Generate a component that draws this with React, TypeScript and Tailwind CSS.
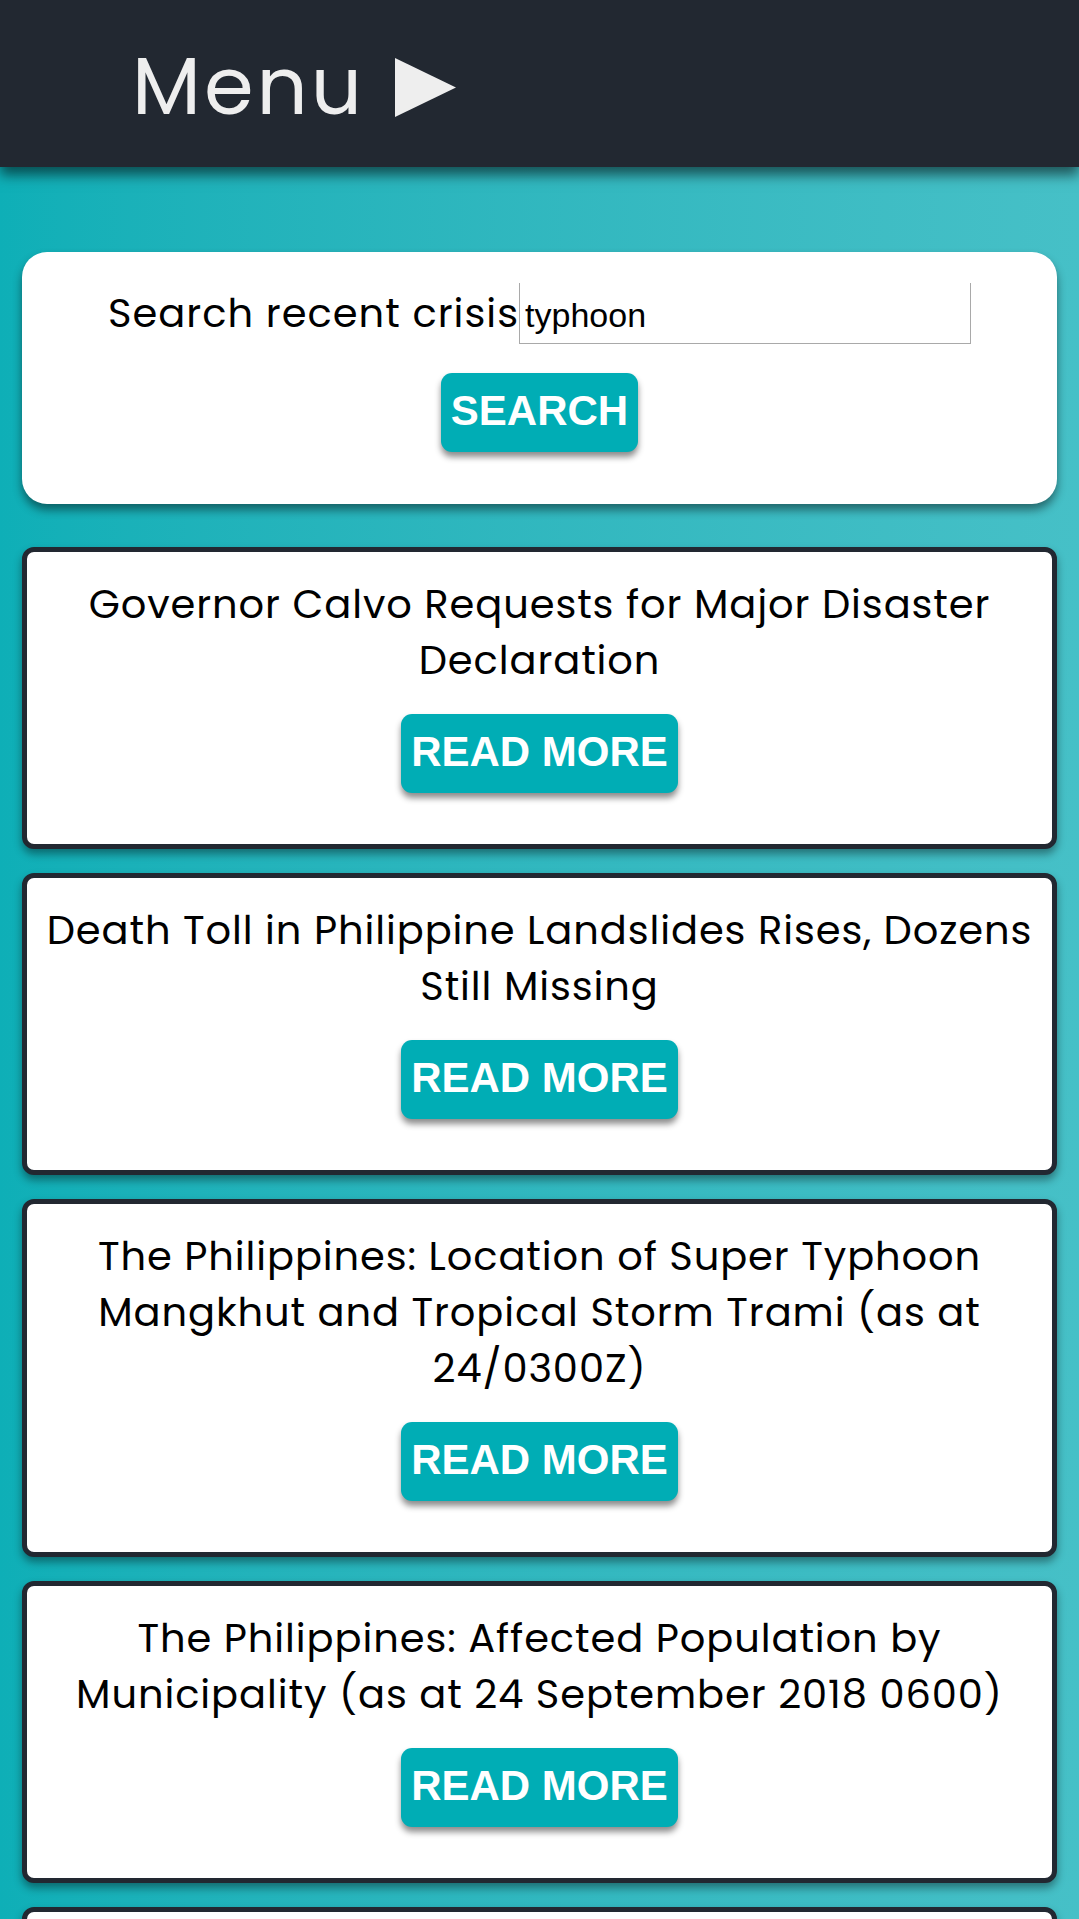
import React, { useState } from "react";

const articles = [
  "Governor Calvo Requests for Major Disaster Declaration",
  "Death Toll in Philippine Landslides Rises, Dozens Still Missing",
  "The Philippines: Location of Super Typhoon Mangkhut and Tropical Storm Trami (as at 24/0300Z)",
  "The Philippines: Affected Population by Municipality (as at 24 September 2018 0600)",
  "Philippines: Typhoon Mangkhut Situation Report No. 3",
];

const titleFont = { fontFamily: '"Poppins", "Noto Sans", sans-serif' };
const btnFont = { fontFamily: '"Liberation Sans", Arial, sans-serif' };

function ActionButton({ label }: { label: string }) {
  return (
    <button
      type="button"
      style={btnFont}
      className="rounded-[11px] bg-[#00adb5] px-[10px] pt-[14px] pb-[18px] text-[42px] leading-[47px] font-bold text-white shadow-[0_5px_6px_rgba(0,0,0,0.45)]"
    >
      {label}
    </button>
  );
}

function ArticleCard({ title }: { title: string }) {
  return (
    <div className="flex flex-col items-center rounded-[12px] border-[5px] border-[#222831] bg-white px-3 pt-6 pb-[51px] shadow-[0_5px_8px_rgba(0,0,0,0.4)]">
      <h2
        style={titleFont}
        className="text-center text-[40px] leading-[56px] tracking-[0.9px] font-normal text-black"
      >
        {title}
      </h2>
      <div className="mt-[26px]">
        <ActionButton label="READ MORE" />
      </div>
    </div>
  );
}

export default function App() {
  const [query, setQuery] = useState("typhoon");

  return (
    <div className="min-h-screen bg-gradient-to-r from-[#0eafb7] to-[#46c0c7]">
      <header className="relative z-10 flex h-[167px] items-center bg-[#222831] pt-[5px] pl-[132px] shadow-[0_8px_12px_rgba(0,0,0,0.55)]">
        <span
          style={titleFont}
          className="text-[80px] leading-none tracking-[3px] text-[#eeeeee]"
        >
          Menu
        </span>
        <svg
          width="61"
          height="59"
          viewBox="0 0 61 59"
          className="ml-[30px] mt-[2px]"
        >
          <polygon points="0,0 61,29.5 0,59" fill="#eeeeee" />
        </svg>
      </header>

      <main className="flex flex-col px-[22px] pt-[85px] pb-10">
        <section className="flex flex-col items-center rounded-[25px] bg-white pt-[31px] pb-[52px] shadow-[0_6px_10px_rgba(0,0,0,0.45)]">
          <div className="flex items-baseline">
            <label
              htmlFor="crisis"
              style={titleFont}
              className="text-[40px] leading-[56px] tracking-[1px] text-black"
            >
              Search recent crisis
            </label>
            <input
              id="crisis"
              value={query}
              onChange={(e) => setQuery(e.target.value)}
              style={btnFont}
              className="h-[61px] w-[452px] border-x border-b border-[#a9a9a9] bg-white px-[5px] pt-[4px] text-[34px] text-black outline-none"
            />
          </div>
          <div className="mt-[29px]">
            <ActionButton label="SEARCH" />
          </div>
        </section>

        <div className="mt-[43px] flex flex-col gap-6">
          {articles.map((t) => (
            <ArticleCard key={t} title={t} />
          ))}
        </div>
      </main>
    </div>
  );
}
